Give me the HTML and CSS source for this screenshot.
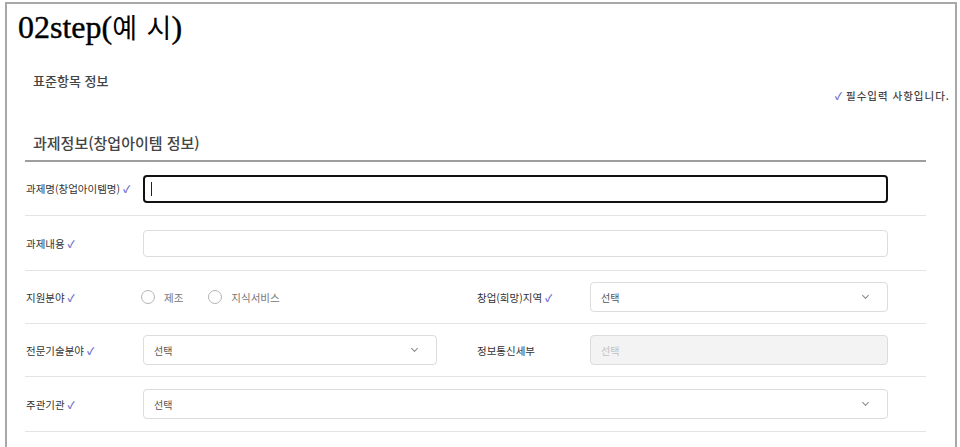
FILE: index.html
```html
<!DOCTYPE html>
<html lang="ko">
<head>
<meta charset="utf-8">
<link rel="stylesheet" href="styles.css">
</head>
<body>
<div class="frame">
  <h1 class="title">02step(<span class="ko">예 시</span>)</h1>
  <div class="std-head">
    <span class="std-title">표준항목 정보</span>
    <span class="note"><span class="chk">✓</span> 필수입력 사항입니다.</span>
  </div>
  <h2 class="section">과제정보(창업아이템 정보)</h2>
  <div class="form">
    <div class="row">
      <div class="label">과제명(창업아이템명) <span class="chk">✓</span></div>
      <div class="input focus"><span class="caret"></span></div>
    </div>
    <div class="row">
      <div class="label">과제내용 <span class="chk">✓</span></div>
      <div class="input"></div>
    </div>
    <div class="row split">
      <div class="half">
        <div class="label">지원분야 <span class="chk">✓</span></div>
        <div class="radios">
          <span class="radio"><span class="dot"></span>제조</span>
          <span class="radio"><span class="dot"></span>지식서비스</span>
        </div>
      </div>
      <div class="half">
        <div class="label">창업(희망)지역 <span class="chk">✓</span></div>
        <div class="input select"><span class="ph">선택</span><span class="arrow"></span></div>
      </div>
    </div>
    <div class="row split">
      <div class="half">
        <div class="label">전문기술분야 <span class="chk">✓</span></div>
        <div class="input select"><span class="ph">선택</span><span class="arrow"></span></div>
      </div>
      <div class="half">
        <div class="label">정보통신세부</div>
        <div class="input select disabled"><span class="ph">선택</span></div>
      </div>
    </div>
    <div class="row">
      <div class="label">주관기관 <span class="chk">✓</span></div>
      <div class="input select"><span class="ph">선택</span><span class="arrow"></span></div>
    </div>
  </div>
</div>
</body>
</html>
```
FILE: styles.css
```css
html, body {
  margin: 0;
  padding: 0;
  background: #fff;
}
body {
  font-family: "Noto Sans CJK KR", "Noto Sans", sans-serif;
  color: #333;
  overflow: hidden;
}
.frame {
  margin: 2px 0 0 5px;
  width: 948px;
  height: 460px;
  border: 2px solid #a8a8a8;
  border-bottom: none;
}
.title {
  margin: 3px 0 0 11px;
  font-family: "Liberation Serif", "Noto Sans CJK KR", serif;
  font-size: 32px;
  font-weight: normal;
  line-height: 40px;
  color: #000;
  -webkit-text-stroke: 0.4px #000;
}
.title .ko {
  font-family: "Noto Sans CJK KR", sans-serif;
  font-size: 27px;
  -webkit-text-stroke: 0;
  letter-spacing: 0;
  word-spacing: 2px;
}
.std-head {
  display: flex;
  justify-content: space-between;
  align-items: flex-start;
  margin: 25px 0 0 26px;
  padding-right: 5px;
}
.std-title {
  font-size: 13px;
  font-weight: 500;
  color: #444;
  line-height: 18px;
}
.note {
  margin-top: 18px;
  font-size: 10.5px;
  font-weight: 500;
  color: #444;
  line-height: 12px;
  letter-spacing: 1px;
}
.chk {
  color: #6e6ad0;
  font-size: 10px;
  font-weight: 700;
  letter-spacing: 0;
}
.section {
  margin: 31px 0 0 26px;
  font-size: 15px;
  font-weight: 500;
  color: #444;
  line-height: 20px;
}
.form {
  margin: 7px 29px 0 18px;
  border-top: 2px solid #9e9e9e;
}
.row {
  display: flex;
  align-items: center;
  height: 52px;
  padding: 0 38px 0 1px;
  border-bottom: 1px solid #e4e4e4;
}
.row:nth-child(1) { height: 53px; }
.row:nth-child(2) { height: 54px; }
.row:nth-child(5) { height: 54px; }
.label {
  flex: 0 0 117px;
  font-size: 10.5px;
  font-weight: 400;
  color: #333;
  white-space: nowrap;
}
.input {
  flex: 1;
  height: 27px;
  box-sizing: border-box;
  border: 1px solid #dcdcdc;
  border-radius: 4px;
  background: #fff;
  display: flex;
  align-items: center;
  padding: 0 10px;
}
.input.focus {
  border: 2px solid #111;
  height: 28px;
  padding-left: 6px;
}
.caret {
  width: 1px;
  height: 14px;
  background: #222;
}
.select {
  height: 30px;
  justify-content: space-between;
}
.ph {
  font-size: 10px;
  color: #555;
}
.disabled {
  background: #f3f3f3;
}
.disabled .ph {
  color: #c2c2c2;
}
.arrow {
  width: 4px;
  height: 4px;
  border-right: 1.3px solid #888;
  border-bottom: 1.3px solid #888;
  transform: rotate(45deg);
  margin: -3px 9px 0 0;
}
.split {
  gap: 40px;
}
.half {
  flex: 1;
  display: flex;
  align-items: center;
}
.half .label { flex-basis: 113px; }
.half:first-child .label { flex-basis: 117px; }
.radios {
  display: flex;
  gap: 25px;
  flex: 1;
  margin-left: -2px;
}
.radio {
  display: flex;
  align-items: center;
  gap: 9px;
  font-size: 10.5px;
  color: #777;
}
.dot {
  width: 14px;
  height: 14px;
  box-sizing: border-box;
  border: 1px solid #b5b5b5;
  border-radius: 50%;
  background: #fff;
}
```
